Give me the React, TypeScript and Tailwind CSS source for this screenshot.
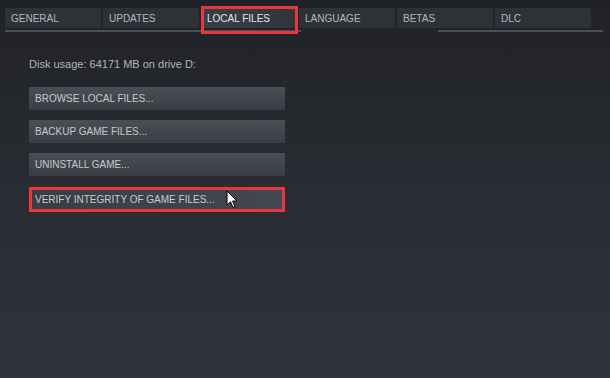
const tabs = ['GENERAL', 'UPDATES', 'LOCAL FILES', 'LANGUAGE', 'BETAS', 'DLC'];

const buttons = ['BROWSE LOCAL FILES...', 'BACKUP GAME FILES...', 'UNINSTALL GAME...'];

function Cursor() {
  return (
    <svg className="absolute left-[226px] top-[190px]" width="12" height="19" viewBox="0 0 12 19">
      <path d="M1 1 L1 15 L4.5 11.8 L7 17.5 L9 16.6 L6.6 11 L11 11 Z" fill="#ffffff" stroke="#000000" strokeWidth="1" strokeLinejoin="round" />
    </svg>
  );
}

export default function App() {
  return (
    <div
      className="relative w-[610px] h-[378px] overflow-hidden bg-gradient-to-b from-[#202227] via-[#292c32] to-[#30343a] text-[#b4b8be]"
      style={{ fontFamily: '"Liberation Sans", Arial, sans-serif' }}
    >
      <div className="pt-[8px] pl-[5px] flex gap-[2px]">
        {tabs.map((t) => (
          <div
            key={t}
            className={
              t === 'LOCAL FILES'
                ? 'relative w-[96px] h-[20px] flex items-center pl-[6px] text-[10px] text-[#e4e6e9] bg-gradient-to-r from-[#3a3e46] to-[#30343b]'
                : 'w-[96px] h-[20px] flex items-center pl-[6px] text-[10px] bg-[#2e3137]'
            }
          >
            {t}
            {t === 'LOCAL FILES' && (
              <div className="absolute left-[0px] top-[-2px] w-[97px] h-[28px] border-[3px] border-[#e8383e]" />
            )}
          </div>
        ))}
      </div>
      <div className="mt-[2px] flex h-[2px]">
        <div className="ml-[5px] w-[296px] h-[2px] bg-[#4a4e55]" />
        <div className="ml-[137px] w-[165px] h-[2px] bg-[#4a4e55]" />
      </div>

      <div className="pl-[29px] pt-[25px]">
        <div className="text-[11px] leading-[14px] text-[#b0b4ba]">Disk usage: 64171 MB on drive D:</div>
        <div className="mt-[16px] flex flex-col gap-[10px]">
          {buttons.map((b) => (
            <div
              key={b}
              className="w-[256px] h-[23px] flex items-center pl-[6px] text-[10px] text-[#c6c9ce] bg-gradient-to-b from-[#4a4e56] to-[#3a3d44]"
            >
              {b}
            </div>
          ))}
        </div>
        <div className="mt-[11px] w-[256px] h-[25px] border-[3px] border-[#e8383e] bg-gradient-to-r from-[#3a3d44] to-[#44474f] flex items-center pl-[3px] text-[10px] text-[#c8cbd0]">
          VERIFY INTEGRITY OF GAME FILES...
        </div>
      </div>
      <Cursor />
    </div>
  );
}
